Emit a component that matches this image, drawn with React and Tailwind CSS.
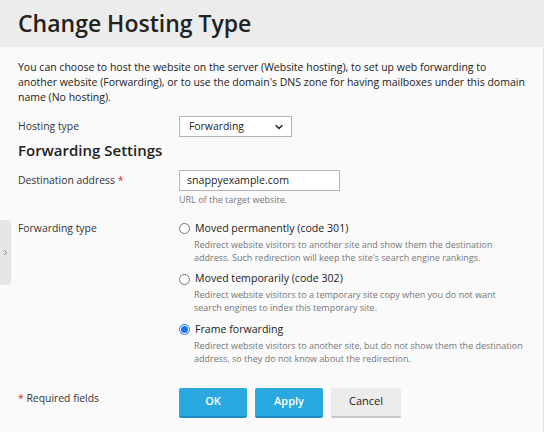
import React, { useState } from "react";
import { ChevronDown, ChevronRight } from "lucide-react";

const options = [
  {
    id: "301",
    title: "Moved permanently (code 301)",
    hint: "Redirect website visitors to another site and show them the destination address. Such redirection will keep the site's search engine rankings.",
  },
  {
    id: "302",
    title: "Moved temporarily (code 302)",
    hint: "Redirect website visitors to a temporary site copy when you do not want search engines to index this temporary site.",
  },
  {
    id: "frame",
    title: "Frame forwarding",
    hint: "Redirect website visitors to another site, but do not show them the destination address, so they do not know about the redirection.",
  },
];

export default function App() {
  const [type, setType] = useState("frame");

  return (
    <div className="relative w-[544px] h-[432px] overflow-hidden bg-[#fafafa] text-[#222] font-['Open_Sans',sans-serif]">
      {/* Page header */}
      <div className="h-[47px] bg-[#ececec] px-[18px] flex items-center">
        <h1 className="text-[23px] font-semibold text-[#222] leading-none">Change Hosting Type</h1>
      </div>

      {/* Sidebar toggle */}
      <div className="absolute left-0 top-[220px] w-[11px] h-[65px] bg-[#e6e6e6] rounded-r-[3px] flex items-center justify-center">
        <ChevronRight className="w-[9px] h-[9px] text-[#777]" strokeWidth={2.5} />
      </div>

      <div className="h-full border-r border-[#e3e3e3] px-[18px] pt-[13px]">
        <p className="text-[10.5px] leading-[15px] text-[#222] whitespace-nowrap">
          You can choose to host the website on the server (Website hosting), to set up web forwarding to
          <br />
          another website (Forwarding), or to use the domain's DNS zone for having mailboxes under this domain
          <br />
          name (No hosting).
        </p>

        <div className="grid grid-cols-[161px_1fr] items-center mt-[11px]">
          <label className="text-[10.4px] text-[#333]">Hosting type</label>
          <div className="relative w-[113px] h-[21px] border border-[#b5b5b5] bg-white flex items-center px-[9px] text-[10.4px]">
            Forwarding
            <ChevronDown className="absolute right-[6px] w-[12px] h-[12px] text-[#222]" strokeWidth={3} />
          </div>
        </div>

        <h2 className="text-[15px] font-semibold text-[#222] mt-[3px] leading-[20px]">Forwarding Settings</h2>

        <div className="grid grid-cols-[161px_1fr] mt-[10px]">
          <label className="text-[10.4px] text-[#333] leading-[21px]">
            Destination address <span className="text-[#d02e2e]">*</span>
          </label>
          <div>
            <div className="w-[161px] h-[21px] border border-[#b5b5b5] bg-white flex items-center px-[7px] text-[10.6px]">
              snappyexample.com
            </div>
            <div className="text-[9px] leading-[13px] text-[#777] mt-[2px]">URL of the target website.</div>
          </div>
        </div>

        <div className="grid grid-cols-[161px_1fr] mt-[15px]">
          <label className="text-[10.4px] leading-[15px] text-[#333]">Forwarding type</label>
          <div className="flex flex-col gap-[8px]">
            {options.map((o) => (
              <div key={o.id} onClick={() => setType(o.id)} className="cursor-pointer">
                <div className="flex items-center gap-[5px] h-[15px]">
                  <span
                    className={
                      type === o.id
                        ? "w-[11px] h-[11px] rounded-full border border-[#1a73e8] bg-white flex items-center justify-center"
                        : "w-[11px] h-[11px] rounded-full border border-[#767676] bg-white"
                    }
                  >
                    {type === o.id && <span className="w-[7px] h-[7px] rounded-full bg-[#1a73e8]" />}
                  </span>
                  <span className="text-[10.6px] text-[#222]">{o.title}</span>
                </div>
                <p className="text-[9px] leading-[13px] text-[#777] pl-[15px] mt-[1.5px] pr-[2px]">{o.hint}</p>
              </div>
            ))}
          </div>
        </div>

        <div className="grid grid-cols-[161px_1fr] mt-[23px]">
          <div className="text-[10.4px] text-[#333] leading-[20px]">
            <span className="text-[#d02e2e]">*</span> Required fields
          </div>
          <div className="flex gap-[8px]">
            <button className="w-[68px] h-[30px] bg-[#29a9df] border-b-2 border-[#1d8fc2] text-white text-[11px] font-semibold rounded-[2px]">OK</button>
            <button className="w-[68px] h-[30px] bg-[#29a9df] border-b-2 border-[#1d8fc2] text-white text-[11px] font-semibold rounded-[2px]">Apply</button>
            <button className="w-[70px] h-[30px] bg-[#ececec] border-b-2 border-[#c7c7c7] text-[#222] text-[11px] rounded-[2px]">Cancel</button>
          </div>
        </div>
      </div>
    </div>
  );
}
